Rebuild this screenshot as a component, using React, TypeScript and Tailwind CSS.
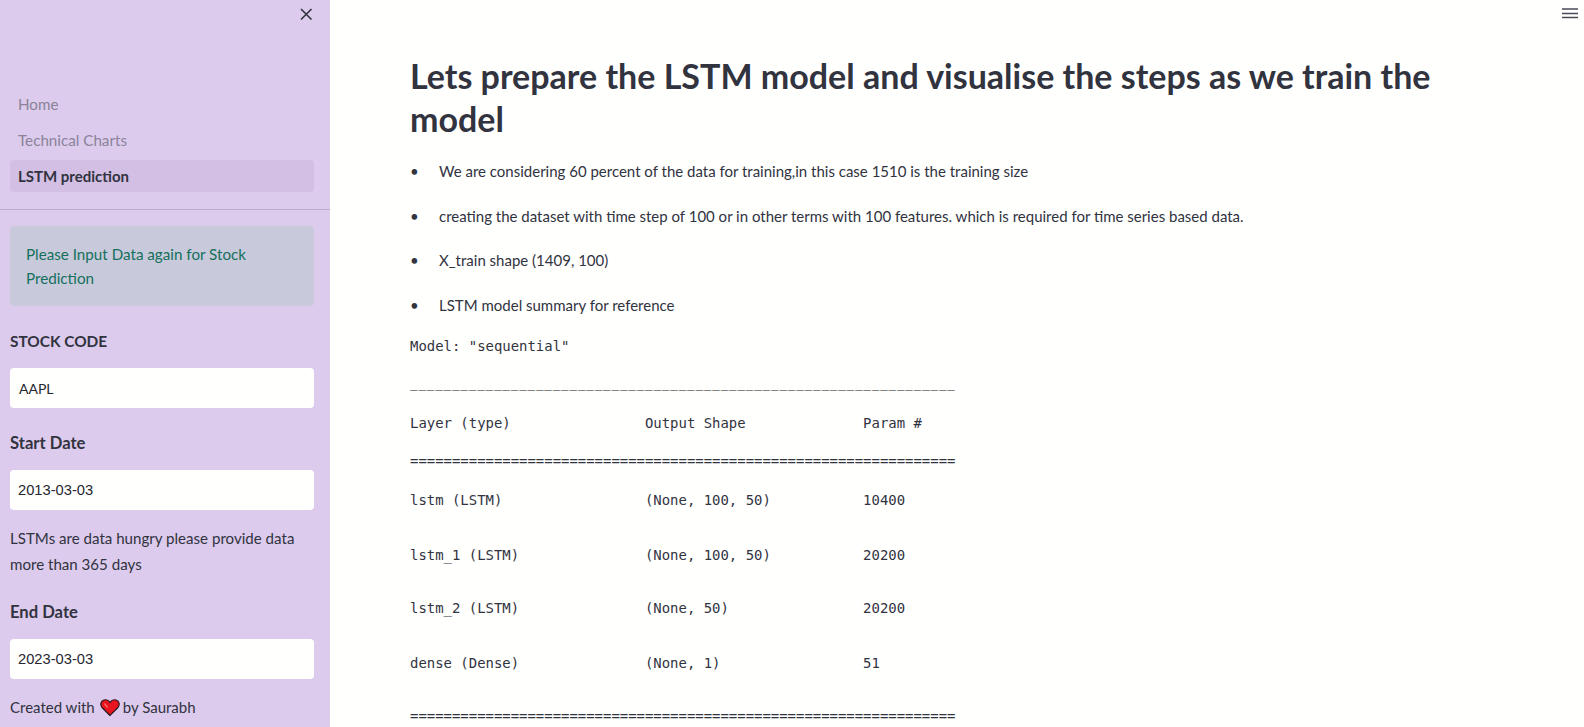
import React from "react";

const sans = "font-['Lato','Noto_Sans',sans-serif]";

const bullets = [
  "We are considering 60 percent of the data for training,in this case 1510 is the training size",
  "creating the dataset with time step of 100 or in other terms with 100 features. which is required for time series based data.",
  "X_train shape (1409, 100)",
  "LSTM model summary for reference",
];

function Field({ label, value, labelSize, date }: { label: string; value: string; labelSize: string; date?: boolean }) {
  return (
    <>
      <div className={`${labelSize} font-bold leading-[24px] text-[#31333f]`}>{label}</div>
      <div className={`mt-[15px] flex h-[40px] items-center rounded-[4px] bg-[#fffffe] text-[#262730] ${date ? "pl-[8px] pt-[1px] font-['Liberation_Sans',sans-serif] text-[14.7px]" : "pl-[9px] text-[14px]"}`}>
        {value}
      </div>
    </>
  );
}

export default function App() {
  return (
    <div className={`flex h-[727px] w-[1584px] overflow-hidden bg-[#fffffe] text-[#31333f] ${sans}`}>
      <aside className="relative flex w-[330px] shrink-0 flex-col bg-[#dccbec]">
        <svg className="absolute left-[298px] top-[6px] h-[16px] w-[16px]" viewBox="0 0 16 16" fill="none" stroke="#31333f" strokeWidth="1.6">
          <path d="M3 3l10.5 10.5M13.5 3L3 13.5" />
        </svg>
        <nav className="ml-[10px] mr-[16px] mt-[88px] text-[15.2px] leading-[32px]">
          <div className="h-[32px] pl-[8px] text-[#8a8399]">Home</div>
          <div className="mt-[4px] h-[32px] pl-[8px] text-[#8a8399]">Technical Charts</div>
          <div className="mt-[4px] h-[32px] rounded-[4px] bg-[#d3bfe3] pl-[8px] text-[15px] font-bold text-[#31333f]">LSTM prediction</div>
        </nav>
        <div className="mt-[17px] h-px bg-[#bcaec9]" />
        <div className="ml-[10px] mr-[16px] mt-[16px] h-[80px] rounded-[4px] bg-[#c8cadb] px-[16px] py-[16px] text-[15.2px] leading-[24px] text-[#14705d]">
          Please Input Data again for Stock Prediction
        </div>
        <div className="ml-[10px] mr-[16px] mt-[23px]">
          <Field label="STOCK CODE" value="AAPL" labelSize="text-[15.4px]" />
          <div className="h-[23px]" />
          <Field label="Start Date" value="2013-03-03" labelSize="text-[16.6px]" date />
          <div className="mt-[15px] text-[15.1px] leading-[26px]">LSTMs are data hungry please provide data more than 365 days</div>
          <div className="h-[23px]" />
          <Field label="End Date" value="2023-03-03" labelSize="text-[16.6px]" date />
          <div className="mt-[16px] flex items-center text-[15px] leading-[24px]">
            Created with
            <svg className="ml-[5px] mr-[3px] h-[20px] w-[20px]" viewBox="0 0 20 20">
              <path d="M10 18.500L2 10.500C0 8 .5 4 4 3c2.500-.7 4.800.4 6 2.500C11.200 3.400 13.500 2.300 16 3c3.500 1 4 5 2 7.500z" fill="#e8151f" stroke="#2a1a22" strokeWidth="1.2" />
              <path d="M4.500 6.500l3 4" stroke="#f7858a" strokeWidth="1.200" />
            </svg>
            by Saurabh
          </div>
        </div>
      </aside>
      <main className="relative min-w-0 flex-1 pl-[80px] pr-[80px] pt-[54px]">
        <svg className="absolute right-[6px] top-[8px] h-[11px] w-[16px]" viewBox="0 0 16 11" fill="none" stroke="#4a4b57" strokeWidth="1.300">
          <path d="M0 1h16M0 5.500h16M0 9.500h16" />
        </svg>
        <h1 className="text-[34px] font-bold leading-[43px] text-[#31333f]">
          Lets prepare the LSTM model and visualise the steps as we train the model
        </h1>
        <ul className="mt-[19px] text-[15px] leading-[24px]">
          {bullets.map((b, i) => (
            <li key={b} className={`flex ${i === 0 ? "" : i === 2 ? "mt-[20px]" : "mt-[21px]"}`}>
              <span className="w-[29px] shrink-0">•</span>
              <span>{b}</span>
            </li>
          ))}
        </ul>
        <div className="mt-[18px] whitespace-pre font-['DejaVu_Sans_Mono',monospace] text-[13.95px] leading-[22.4px] text-[#31333f]">
          <div className="mb-[16px]">Model: "sequential"</div>
          <div className="mb-[16px] text-[12.5px] tracking-[0.87px] text-[#14151c]">{"_".repeat(65)}</div>
          <div className="mb-[16px]">{"Layer (type)                Output Shape              Param #"}</div>
          <div className="mb-[16px]">{"=".repeat(65)}</div>
          <div className="mb-[33px]">{"lstm (LSTM)                 (None, 100, 50)           10400"}</div>
          <div className="mb-[31px]">{"lstm_1 (LSTM)               (None, 100, 50)           20200"}</div>
          <div className="mb-[32px]">{"lstm_2 (LSTM)               (None, 50)                20200"}</div>
          <div className="mb-[31px]">{"dense (Dense)               (None, 1)                 51"}</div>
          <div>{"=".repeat(65)}</div>
        </div>
      </main>
    </div>
  );
}
